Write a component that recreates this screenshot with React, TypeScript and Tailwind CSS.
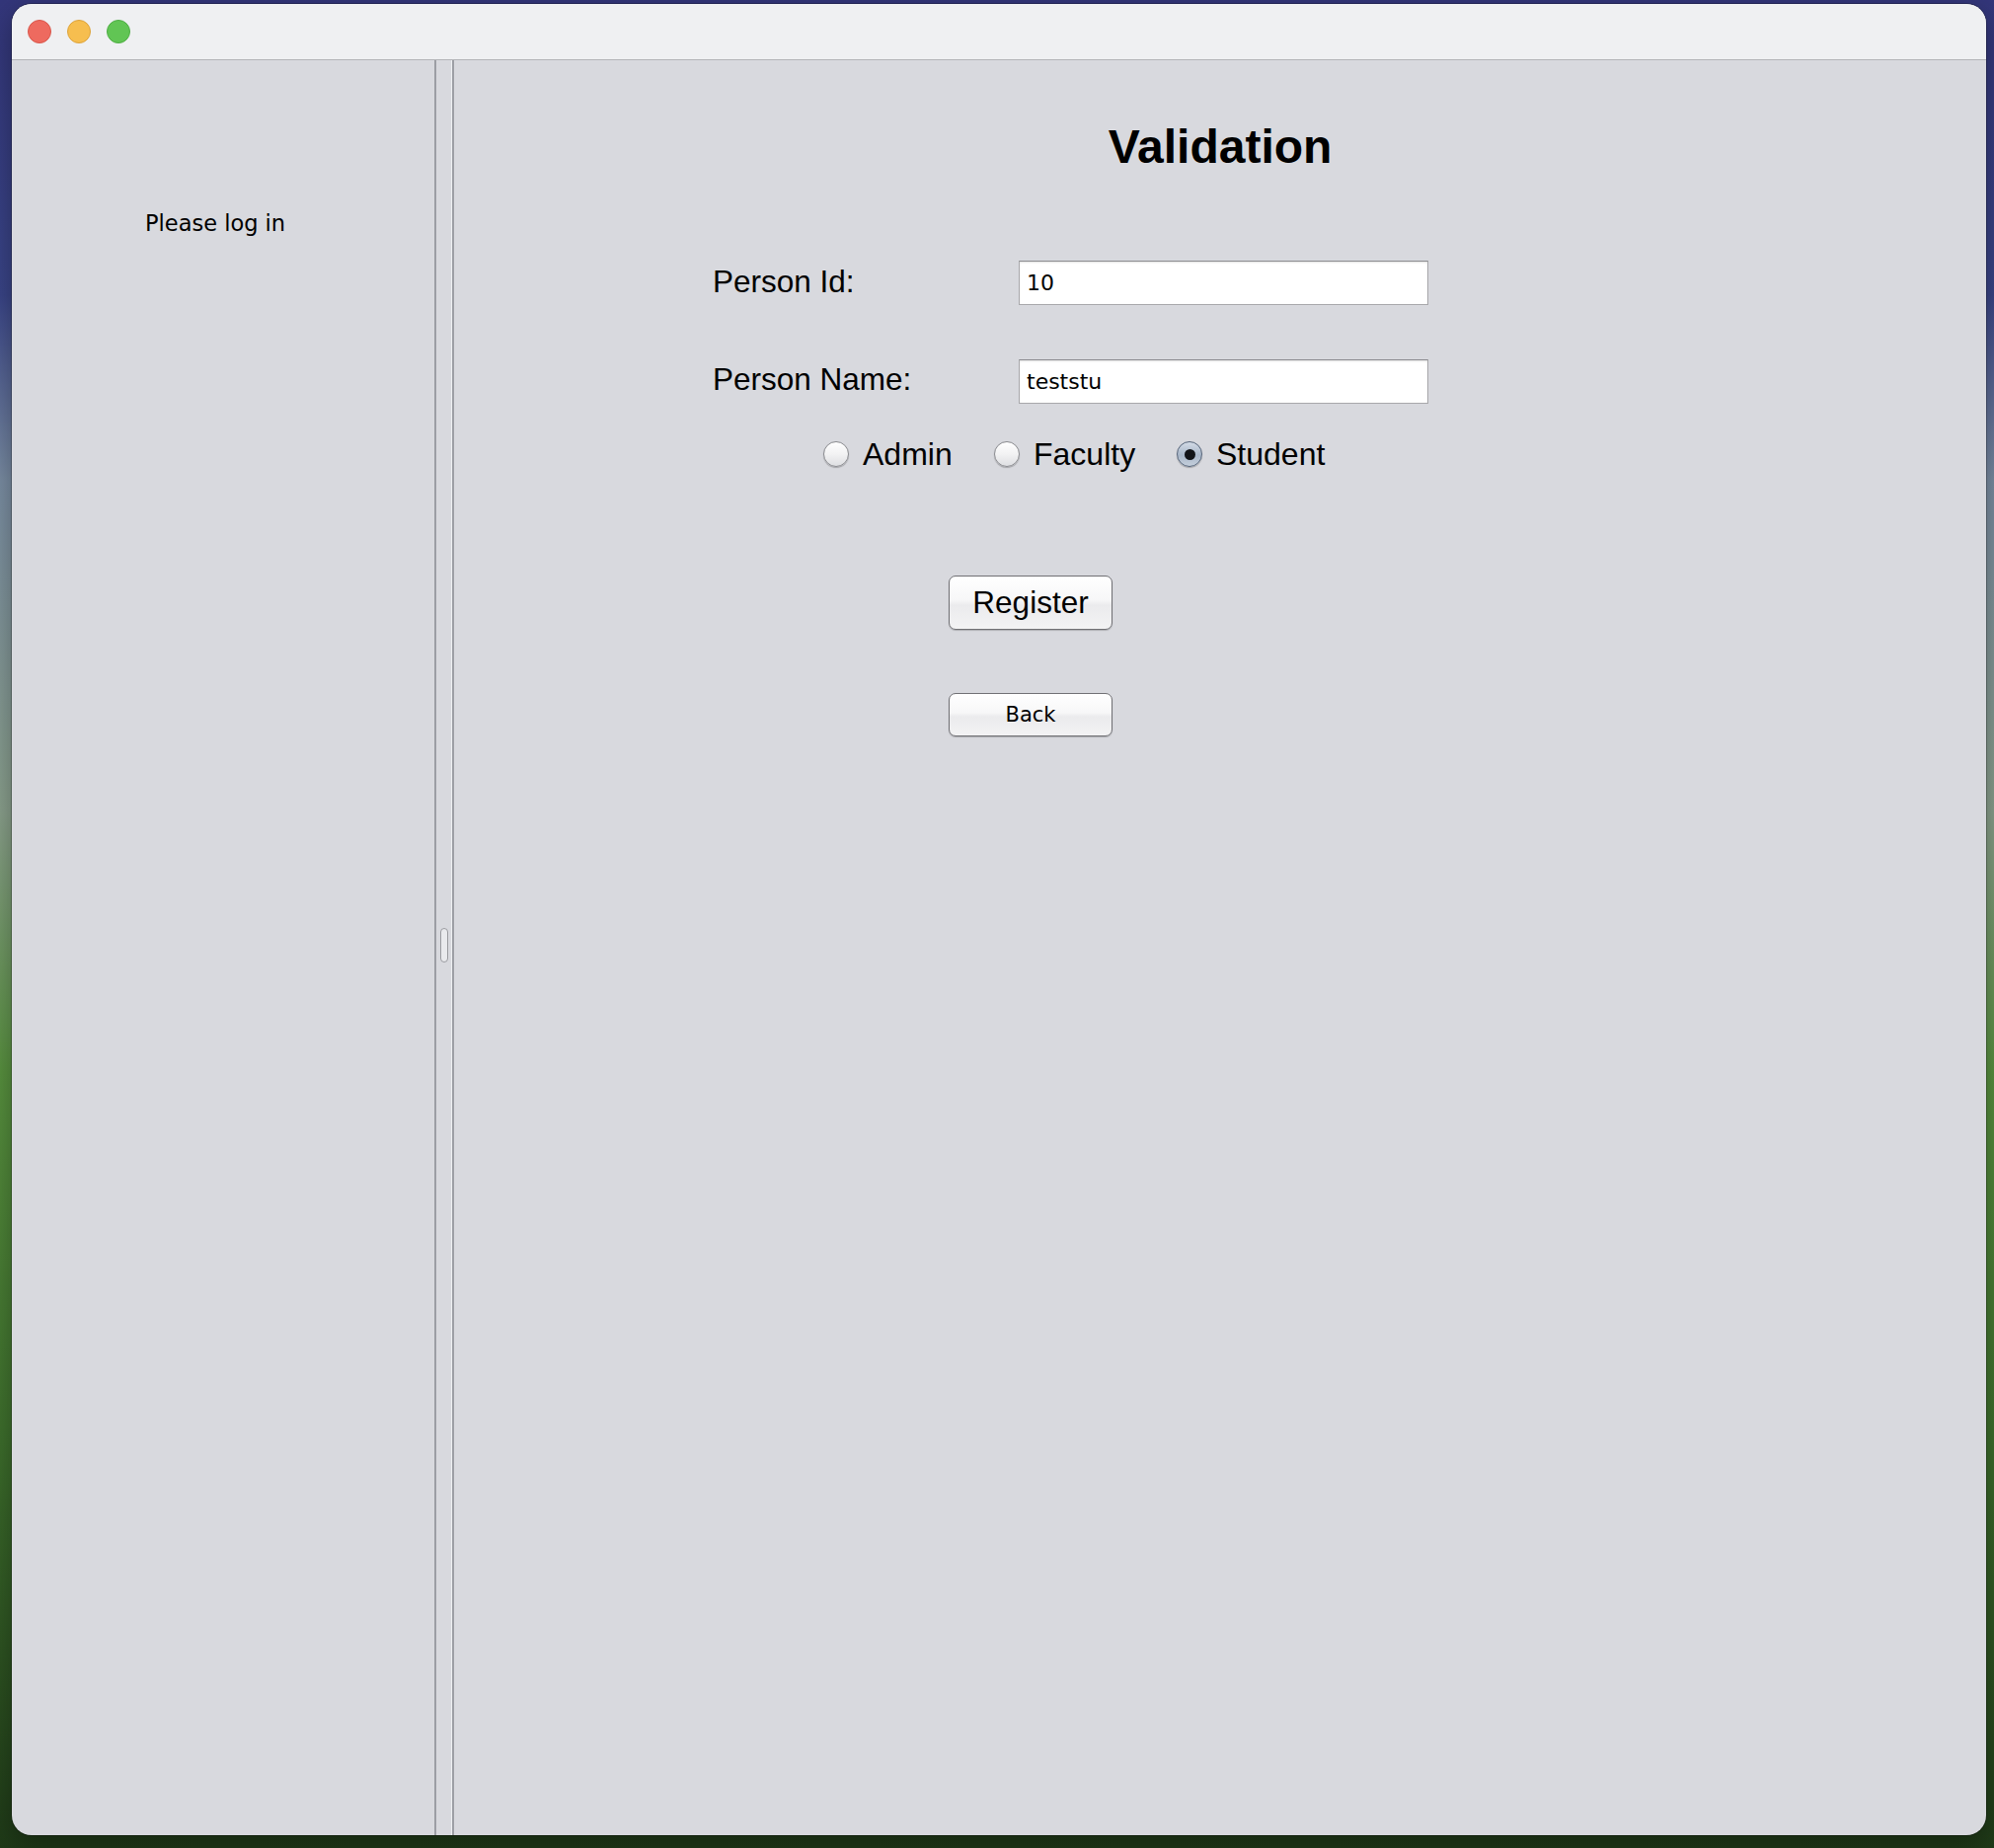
import { FC } from "react";

const helvetica = "font-['Liberation_Sans',Arial,sans-serif]";
const lucida = "font-['DejaVu_Sans','Noto_Sans',sans-serif]";

interface FieldRowProps {
  label: string;
  value: string;
  labelOffset: string;
  className?: string;
}

const FieldRow: FC<FieldRowProps> = ({ label, value, labelOffset, className }) => (
  <div className={`flex items-start pl-[262px] ${className ?? ""}`}>
    <div className={`w-[310px] ${labelOffset} ${helvetica} text-[31.5px] leading-none text-black`}>{label}</div>
    <div className="flex h-[45px] w-[415px] items-center border border-[#a8a8ab] border-t-[#8c8c90] bg-white pl-[7px] shadow-[inset_0_1px_2px_rgba(0,0,0,0.12)]">
      <span className={`${lucida} text-[22px] leading-none text-black`}>{value}</span>
    </div>
  </div>
);

interface RadioProps {
  label: string;
  checked?: boolean;
  className?: string;
}

const Radio: FC<RadioProps> = ({ label, checked, className }) => (
  <div className={`flex items-center gap-[14px] ${className ?? ""}`}>
    {checked ? (
      <div className="flex h-[26px] w-[26px] items-center justify-center rounded-full border border-[#56657a] bg-[linear-gradient(180deg,#d3dbe6_0%,#a9b7c9_55%,#c4cfdc_100%)] shadow-[0_1px_1px_rgba(0,0,0,0.25)]">
        <div className="h-[11px] w-[11px] rounded-full bg-[#121418]" />
      </div>
    ) : (
      <div className="h-[26px] w-[26px] rounded-full border border-[#8a8b8f] bg-[linear-gradient(180deg,#ffffff_0%,#f2f2f3_50%,#dedfe2_100%)] shadow-[0_1px_1px_rgba(0,0,0,0.25)]" />
    )}
    <span className={`${helvetica} text-[32px] leading-none text-black`}>{label}</span>
  </div>
);

interface ButtonProps {
  label: string;
  className?: string;
  textClassName: string;
}

const MacButton: FC<ButtonProps> = ({ label, className, textClassName }) => (
  <div
    className={`ml-[501px] flex w-[166px] items-center justify-center rounded-[7px] border border-[#707074] bg-[linear-gradient(180deg,#ffffff_0%,#f7f7f8_45%,#ebebed_55%,#f3f3f4_100%)] shadow-[0_1px_1px_rgba(0,0,0,0.2)] ${className ?? ""}`}
  >
    <span className={`leading-none text-black ${textClassName}`}>{label}</span>
  </div>
);

const TrafficLights: FC = () => (
  <div className="flex items-center gap-[16px] pl-[16px]">
    <div className="h-[24px] w-[24px] rounded-full border border-[#d8574c] bg-[#ee6a5f]" />
    <div className="h-[24px] w-[24px] rounded-full border border-[#dca33c] bg-[#f6be4f]" />
    <div className="h-[24px] w-[24px] rounded-full border border-[#4ead44] bg-[#61c554]" />
  </div>
);

export default function App() {
  return (
    <div className="h-[1872px] w-[2020px] overflow-hidden bg-[linear-gradient(180deg,#33367a_0%,#3a4588_16%,#7a8da3_26%,#8aa08c_44%,#58913f_58%,#3d6e2c_78%,#1f3a18_100%)] pl-[12px] pt-[4px]">
      <div className="flex h-[1855px] w-[2000px] flex-col overflow-hidden rounded-[20px] bg-[#d8d9de] shadow-[0_0_0_1px_rgba(0,0,0,0.25),0_10px_30px_rgba(0,0,0,0.35)]">
        <div className="flex h-[57px] shrink-0 items-center border-b border-[#b3b4b8] bg-[#eff0f2]">
          <TrafficLights />
        </div>

        <div className="flex flex-1">
          <div className="w-[428px] shrink-0 pl-[135px] pt-[154px]">
            <div className={`${lucida} text-[22.5px] leading-none text-black`}>Please log in</div>
          </div>

          <div className="flex w-[20px] shrink-0">
            <div className="w-[2px] bg-[#9c9ea4]" />
            <div className="flex flex-1 items-center justify-center">
              <div className="mb-[6px] h-[35px] w-[8px] rounded-full border border-[#9a9ba0] bg-[#e9eaed]" />
            </div>
            <div className="w-[1px] bg-[#eef0f2]" />
            <div className="w-[2px] bg-[#9c9ea4]" />
          </div>

          <div className="flex flex-1 flex-col">
            <h1 className={`mt-[64px] h-[48px] text-center ${helvetica} text-[48px] font-bold leading-none text-black`}>
              Validation
            </h1>

            <FieldRow label="Person Id:" value="10" labelOffset="mt-[6px]" className="mt-[91px]" />
            <FieldRow label="Person Name:" value="teststu" labelOffset="mt-[5px]" className="mt-[55px]" />

            <div className="mt-[35px] flex pl-[374px]">
              <Radio label="Admin" className="w-[173px]" />
              <Radio label="Faculty" className="w-[185px]" />
              <Radio label="Student" checked />
            </div>

            <MacButton label="Register" className="mt-[107px] h-[55px]" textClassName={`${helvetica} text-[31.5px]`} />
            <MacButton label="Back" className="mt-[64px] h-[44px]" textClassName={`${lucida} text-[21px]`} />
          </div>
        </div>
      </div>
    </div>
  );
}
